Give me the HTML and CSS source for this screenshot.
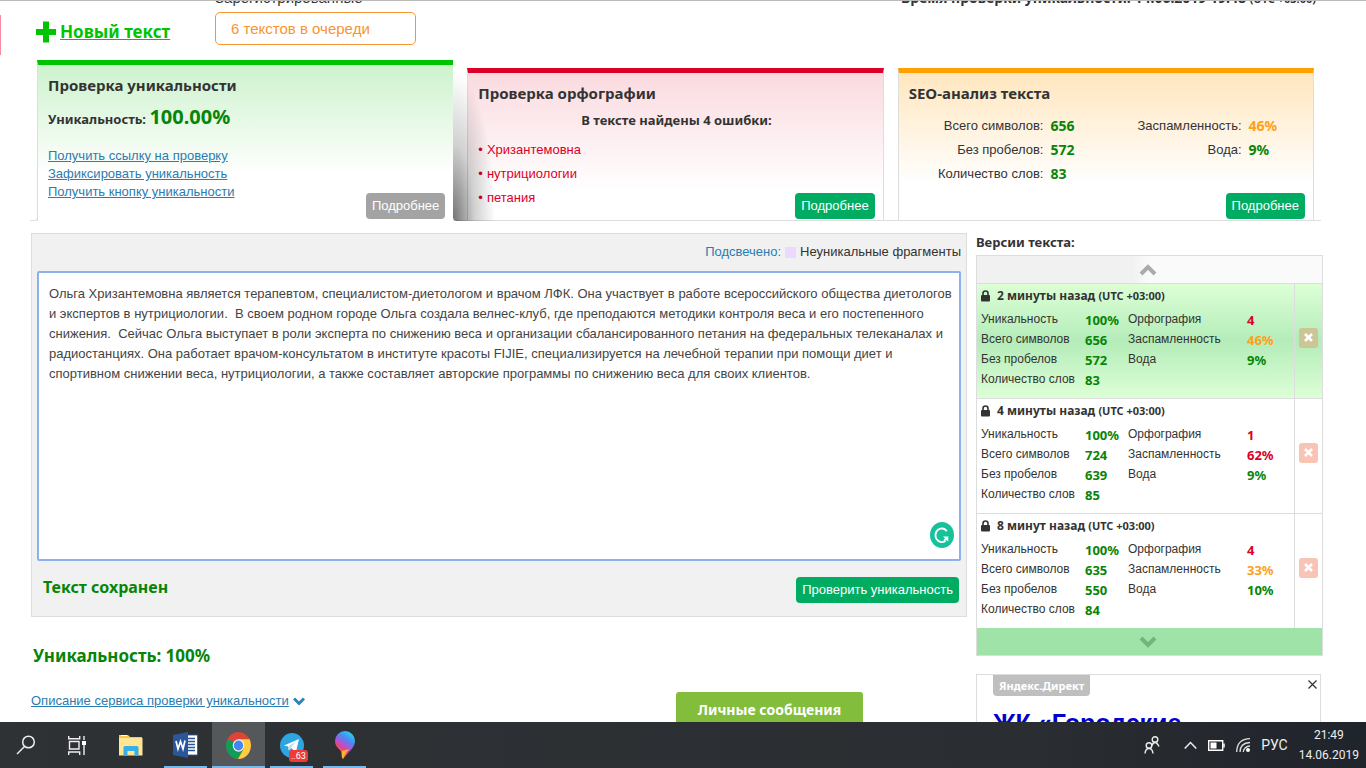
FILE: index.html
```html
<!DOCTYPE html>
<html lang="ru">
<head>
<meta charset="utf-8">
<title>Проверка уникальности текста</title>
<link rel="stylesheet" href="styles.css">
</head>
<body>
<div class="page">
  <div class="side-tab"></div>
  <header class="top">
    <a class="new-text" href="#"><svg width="20" height="22" viewBox="0 0 20 22"><path d="M7 0.500h6v7.500h7v6h-7v7.500H7V14H0V8h7z" fill="#00c400"/></svg><span>Новый текст</span></a>
    <div class="queue">
      <span class="queue-label">Зарегистрированные</span>
      <div class="queue-box">6 текстов в очереди</div>
    </div>
    <div class="check-time">Время проверки уникальности: 14.06.2019 19:48 <small>(UTC +03:00)</small></div>
  </header>

  <section class="cards">
    <article class="card card-green">
      <h2>Проверка уникальности</h2>
      <p class="unique">Уникальность: <b>100.00%</b></p>
      <div class="card-foot">
        <div class="links">
          <a href="#">Получить ссылку на проверку</a>
          <a href="#">Зафиксировать уникальность</a>
          <a href="#">Получить кнопку уникальности</a>
        </div>
        <button class="btn btn-gray">Подробнее</button>
      </div>
    </article>
    <article class="card card-red">
      <h2>Проверка орфографии</h2>
      <p class="found">В тексте найдены 4 ошибки:</p>
      <div class="card-foot">
        <ul class="errors"><li>Хризантемовна</li><li>нутрициологии</li><li>петания</li></ul>
        <button class="btn">Подробнее</button>
      </div>
    </article>
    <article class="card card-orange">
      <h2>SEO-анализ текста</h2>
      <table class="seo">
        <tr><th>Всего символов:</th><td class="ok">656</td><th>Заспамленность:</th><td class="warn">46%</td></tr>
        <tr><th>Без пробелов:</th><td class="ok">572</td><th>Вода:</th><td class="ok">9%</td></tr>
        <tr><th>Количество слов:</th><td class="ok">83</td><td></td><td></td></tr>
      </table>
      <button class="btn">Подробнее</button>
    </article>
  </section>

  <div class="columns">
    <main>
      <section class="editor">
        <div class="legend"><label for="text">Подсвечено:</label><i class="swatch"></i><span>Неуникальные фрагменты</span></div>
        <div class="area">
          <textarea id="text" spellcheck="false">Ольга Хризантемовна является терапевтом, специалистом-диетологом и врачом ЛФК. Она участвует в работе всероссийского общества диетологов
и экспертов в нутрициологии.  В своем родном городе Ольга создала велнес-клуб, где преподаются методики контроля веса и его постепенного
снижения.  Сейчас Ольга выступает в роли эксперта по снижению веса и организации сбалансированного петания на федеральных телеканалах и
радиостанциях. Она работает врачом-консультатом в институте красоты FIJIE, специализируется на лечебной терапии при помощи диет и
спортивном снижении веса, нутрициологии, а также составляет авторские программы по снижению веса для своих клиентов.</textarea>
          <svg class="grammar" width="24" height="26" viewBox="0 0 24 26"><ellipse cx="12" cy="13" rx="12" ry="13" fill="#15c39a"/><path d="M16.800 9.200A6.300 6.800 0 1 0 15.500 18.700" fill="none" stroke="#fff" stroke-width="1.900"/><path d="M13 14.500h5.300v5l-1.900-1.600-1.800 1-.9-1.500 1.300-1z" fill="#fff"/></svg>
        </div>
        <div class="editor-foot"><strong>Текст сохранен</strong><button class="btn">Проверить уникальность</button></div>
      </section>
      <h3 class="result">Уникальность: 100%</h3>
      <div class="bottom-row">
        <a class="about" href="#"><span>Описание сервиса проверки уникальности</span><svg width="12" height="9" viewBox="0 0 12 9"><path d="M1 1.500l5 5 5-5" fill="none" stroke="#2b83b8" stroke-width="3"/></svg></a>
        <button class="messages">Личные сообщения</button>
      </div>
    </main>

    <aside>
      <h3 class="side-title">Версии текста:</h3>
      <div class="versions">
        <button class="scroll up" aria-label="Вверх"><svg width="18" height="12" viewBox="0 0 18 12"><path d="M2 10l7-7 7 7" fill="none" stroke="#aaa" stroke-width="4"/></svg></button>
        <article class="version active">
          <div class="info">
            <h4><svg width="9" height="12" viewBox="0 0 9 12"><path d="M2 6V3.500a2.500 2.500 0 0 1 5 0V6" fill="none" stroke="#333" stroke-width="1.600"/><rect y="5" width="9" height="6.500" rx="1" fill="#333"/></svg>2 минуты назад <small>(UTC +03:00)</small></h4>
            <table>
              <tr><th>Уникальность</th><td class="ok">100%</td><th>Орфография</th><td class="bad">4</td></tr>
              <tr><th>Всего символов</th><td class="ok">656</td><th>Заспамленность</th><td class="warn">46%</td></tr>
              <tr><th>Без пробелов</th><td class="ok">572</td><th>Вода</th><td class="ok">9%</td></tr>
              <tr><th>Количество слов</th><td class="ok">83</td><th></th><td></td></tr>
            </table>
          </div>
          <div class="remove"><button aria-label="Удалить"><svg width="9" height="9" viewBox="0 0 9 9"><path d="M1 1l7 7M8 1L1 8" stroke="#fff" stroke-width="2.500"/></svg></button></div>
        </article>
        <article class="version">
          <div class="info">
            <h4><svg width="9" height="12" viewBox="0 0 9 12"><path d="M2 6V3.500a2.500 2.500 0 0 1 5 0V6" fill="none" stroke="#333" stroke-width="1.600"/><rect y="5" width="9" height="6.500" rx="1" fill="#333"/></svg>4 минуты назад <small>(UTC +03:00)</small></h4>
            <table>
              <tr><th>Уникальность</th><td class="ok">100%</td><th>Орфография</th><td class="bad">1</td></tr>
              <tr><th>Всего символов</th><td class="ok">724</td><th>Заспамленность</th><td class="bad">62%</td></tr>
              <tr><th>Без пробелов</th><td class="ok">639</td><th>Вода</th><td class="ok">9%</td></tr>
              <tr><th>Количество слов</th><td class="ok">85</td><th></th><td></td></tr>
            </table>
          </div>
          <div class="remove"><button aria-label="Удалить"><svg width="9" height="9" viewBox="0 0 9 9"><path d="M1 1l7 7M8 1L1 8" stroke="#fff" stroke-width="2.500"/></svg></button></div>
        </article>
        <article class="version">
          <div class="info">
            <h4><svg width="9" height="12" viewBox="0 0 9 12"><path d="M2 6V3.500a2.500 2.500 0 0 1 5 0V6" fill="none" stroke="#333" stroke-width="1.600"/><rect y="5" width="9" height="6.500" rx="1" fill="#333"/></svg>8 минут назад <small>(UTC +03:00)</small></h4>
            <table>
              <tr><th>Уникальность</th><td class="ok">100%</td><th>Орфография</th><td class="bad">4</td></tr>
              <tr><th>Всего символов</th><td class="ok">635</td><th>Заспамленность</th><td class="warn">33%</td></tr>
              <tr><th>Без пробелов</th><td class="ok">550</td><th>Вода</th><td class="ok">10%</td></tr>
              <tr><th>Количество слов</th><td class="ok">84</td><th></th><td></td></tr>
            </table>
          </div>
          <div class="remove"><button aria-label="Удалить"><svg width="9" height="9" viewBox="0 0 9 9"><path d="M1 1l7 7M8 1L1 8" stroke="#fff" stroke-width="2.500"/></svg></button></div>
        </article>
        <button class="scroll down" aria-label="Вниз"><svg width="18" height="12" viewBox="0 0 18 12"><path d="M2 2l7 7 7-7" fill="none" stroke="#6fb57c" stroke-width="4"/></svg></button>
      </div>
      <div class="ad">
        <div class="ad-head"><span>Яндекс.Директ</span><button aria-label="Закрыть"><svg width="9" height="9" viewBox="0 0 9 9"><path d="M.5.5l8 8M8.500.5l-8 8" stroke="#333" stroke-width="1.200"/></svg></button></div>
        <a class="ad-title" href="#">ЖК «Городские</a>
      </div>
    </aside>
  </div>
</div>

<footer class="taskbar">
  <div class="apps">
    <button class="app small" aria-label="Поиск"><svg width="20" height="20" viewBox="0 0 20 20"><circle cx="12.500" cy="7" r="5.800" fill="none" stroke="#eee" stroke-width="1.500"/><path d="M8.500 11.500L1 19" stroke="#eee" stroke-width="1.500"/></svg></button>
    <button class="app small" aria-label="Представление задач"><svg width="18" height="19" viewBox="0 0 18 19"><path d="M.7 0v2.700h11V0M.7 19v-3h11v3M1.500 5.500h9.500v7.500H1.500zM16 0v4M16 9v10" fill="none" stroke="#eee" stroke-width="1.400"/><rect x="14" y="5" width="4" height="4" fill="#fff"/></svg></button>
    <button class="app wide" aria-label="Проводник"><svg width="24" height="22" viewBox="0 0 24 22"><path d="M0 1h9l2 2h12v18H0z" fill="#f9c846"/><path d="M0 4h23.500v17.500H0z" fill="#ffe694"/><path d="M2 1.500h6" stroke="#fff" stroke-width="1"/><path d="M4.500 22v-8.500q0-1.500 1.500-1.500h12q1.500 0 1.500 1.500V22h-4v-5h-7v5z" fill="#36aee6"/></svg></button>
    <button class="app open" aria-label="Word"><svg width="25" height="26" viewBox="0 0 25 26"><path d="M13 3h11.500v20H13z" fill="#fff" stroke="#2b579a" stroke-width=".8"/><path d="M14 6.500h8M14 9.500h8M14 12.500h8M14 15.500h8M14 18.500h8" stroke="#2b579a" stroke-width="1.500"/><path d="M0 3L15 0v26L0 23z" fill="#2b579a"/><path d="M3 9l2 8 2.500-7.500L10 17l2-8.500" fill="none" stroke="#fff" stroke-width="1.700"/></svg></button>
    <button class="app open current" aria-label="Chrome"><svg width="25" height="27" viewBox="0 0 26 26" preserveAspectRatio="none"><circle cx="13" cy="13" r="13" fill="#db4437"/><path d="M1.700 6.500A13 13 0 0 0 12.500 26l6-10z" fill="#0f9d58"/><path d="M13 7h11.500A13 13 0 0 1 12.500 26l6-10z" fill="#ffcd40"/><circle cx="13" cy="13" r="6" fill="#f1f1f1"/><circle cx="13" cy="13" r="4.800" fill="#4285f4"/></svg></button>
    <button class="app open" aria-label="Telegram"><svg width="24" height="25" viewBox="0 0 24 25"><ellipse cx="12" cy="12.500" rx="12" ry="12.500" fill="#2ca5e0"/><path d="M4 12.500L19 6l-3 13-5-4-2 2.500-1-4z" fill="#fff"/><path d="M8 13.500l8-5-5.500 6.500-1.500 2.500z" fill="#c8daea"/></svg><span class="badge">..63</span></button>
    <button class="app open" aria-label="Paint 3D"><svg width="20" height="28" viewBox="0 0 20 28"><defs><linearGradient id="drop" x1=".7" y1="0" x2=".25" y2=".9"><stop offset="0" stop-color="#21d4f5"/><stop offset=".3" stop-color="#4a8bf0"/><stop offset=".5" stop-color="#9a5ee0"/><stop offset=".72" stop-color="#f0407e"/><stop offset="1" stop-color="#ff9d28"/></linearGradient></defs><path d="M10 0a10 10 0 0 1 10 10c0 7-8 12-12 18-2-3 0-6-3-9C2 16 0 14 0 10A10 10 0 0 1 10 0z" fill="url(#drop)"/><path d="M7 20q4-1 7-2-5 6-6 10-2-3-1-8z" fill="#ffb52c"/></svg></button>
  </div>
  <div class="tray">
    <svg width="16" height="18" viewBox="0 0 16 18"><g fill="none" stroke="#eee" stroke-width="1.400"><circle cx="11" cy="3.500" r="2.800"/><path d="M8 9.500q1-3 3-3t4 4"/><circle cx="5" cy="9.500" r="2.800"/><path d="M1 17.500q.5-5 4-5t4 5"/></g></svg>
    <svg class="chevron" width="13" height="8" viewBox="0 0 13 8"><path d="M.7 7.500l5.800-6 5.800 6" fill="none" stroke="#eee" stroke-width="1.500"/></svg>
    <svg width="17" height="11" viewBox="0 0 17 11"><path d="M.7.700h14v9.600H.7z" fill="none" stroke="#fff" stroke-width="1.400"/><rect x="2.500" y="2.500" width="6" height="6" fill="#fff"/><path d="M16 3.500v4" stroke="#fff" stroke-width="1.500"/></svg>
    <svg width="14" height="14" viewBox="0 0 14 14"><g fill="none" stroke="#ddd" stroke-width="1.300"><path d="M.7 14Q1 1 14 .7M4 14Q4 5 14 4.500M7.200 14Q8 8.500 14 8"/></g><circle cx="12" cy="12" r="2" fill="#fff"/></svg>
    <span class="lang">РУС</span>
    <div class="clock"><span>21:49</span><span>14.06.2019</span></div>
  </div>
</footer>
</body>
</html>
```
FILE: styles.css
```css
* { box-sizing: border-box; }
body {
  margin: 0;
  height: 100vh;
  display: flex;
  flex-direction: column;
  font-family: "Liberation Sans", "Noto Sans", sans-serif;
  font-size: 13px;
  line-height: 18px;
  color: #333;
  background: #fff;
}
h2, h3, h4, p, ul { margin: 0; padding: 0; }
h2, h3, h4, td, strong, .unique, .unique b, .found, .new-text, .check-time, .messages, .ad-head span {
  font-family: "Noto Sans", "Open Sans", sans-serif;
  font-weight: 700;
}
button { font-family: inherit; border: 0; padding: 0; cursor: pointer; }
a { color: #2b7cb0; }
svg { display: block; flex: none; }
table { border-collapse: collapse; }
th { font-weight: 400; text-align: left; padding: 0; }
td { padding: 0; }
.ok { color: #078507; }
.warn { color: #ff9f1a; }
.bad { color: #dc0028; }

.page {
  flex: 1;
  min-height: 0;
  overflow: hidden;
  position: relative;
  border-top: 1px solid #bbb;
  padding: 0 43px 0 31px;
}
.side-tab {
  position: absolute;
  left: 0;
  top: 14px;
  width: 1px;
  height: 40px;
  background: #f58ca0;
}

.top { display: flex; align-items: flex-start; height: 59px; padding: 0 7px 0 5px; }
.new-text {
  display: flex;
  align-items: center;
  gap: 4px;
  width: 179px;
  margin-top: 20px;
  color: #00c400;
  font-size: 17px;
  line-height: 22px;
}
.queue { width: 201px; margin-top: -12px; }
.queue-label { display: block; font-size: 15px; line-height: 18px; margin-bottom: 5px; }
.queue-box {
  height: 33px;
  border: 1px solid #f79433;
  border-radius: 5px;
  padding: 0 15px;
  font-size: 15px;
  line-height: 31px;
  color: #f79433;
}
.check-time { margin: -12px 0 0 auto; font-size: 14px; }
.check-time small { font-size: 11px; }

.cards {
  display: grid;
  grid-template-columns: repeat(3, minmax(0, 1fr));
  gap: 14px;
  align-items: end;
  padding: 0 9px 0 6px;
  position: relative;
}
.cards::after {
  content: "";
  position: absolute;
  left: 422px;
  right: 2px;
  bottom: 0;
  height: 1px;
  background: #ddd;
}
.card {
  position: relative;
  height: 153px;
  border: 1px solid #ddd;
  border-top: 5px solid;
  padding: 9px 8px 1px 10px;
  display: flex;
  flex-direction: column;
}
.card h2 { font-size: 15px; line-height: 22px; }
.card-green { height: 161px; border-top-color: #00c400; border-bottom: 0; border-right: 0; padding-bottom: 2px; background: linear-gradient(#cdf2cd, #fff 70%); }
.card-red { border-top-color: #dc0028; background: linear-gradient(#fadadf, #fff 80%); }
.card-orange { border-top-color: #ffa000; background: linear-gradient(#ffe6be, #fff 75%); }
.card-green::before {
  content: "";
  position: absolute;
  right: 100%;
  bottom: 0;
  width: 7px;
  height: 7px;
  border: solid #ddd;
  border-width: 0 1px 1px 0;
  border-bottom-right-radius: 4px;
}
.card-green::after {
  content: "";
  position: absolute;
  z-index: 1;
  left: 100%;
  top: 0;
  bottom: 0;
  width: 44px;
  border-bottom-left-radius: 4px;
  background: radial-gradient(ellipse at 0 100%, rgba(0,0,0,.55), rgba(0,0,0,.18) 35%, transparent 68%);
}
.card-foot { flex: 1; min-height: 0; display: flex; justify-content: space-between; align-items: flex-start; }
.card-foot .btn { align-self: flex-end; }
.card-orange .btn { margin: auto 0 0 auto; }
.unique { margin-top: 9px; line-height: 24px; }
.unique b { font-size: 20px; color: #078507; }
.links { display: flex; flex-direction: column; align-items: flex-start; margin-top: 16px; line-height: 18px; }
.found { text-align: center; margin-top: 7px; }
.errors { list-style: none; color: #dc0028; line-height: 24px; margin-top: 9px; }
.errors li::before { content: "•"; margin-right: 4px; }
.seo { width: 100%; table-layout: fixed; line-height: 24px; margin-top: 10px; }
.seo th { text-align: right; width: 34%; }
.seo td { width: 16%; padding-left: 7px; font-size: 14px; }

.btn {
  height: 26px;
  padding: 0 6px;
  border-radius: 4px;
  background: #00ac62;
  color: #fff;
  font-size: 13px;
  line-height: 26px;
}
.btn-gray { background: #a3a3a3; }

.columns {
  display: grid;
  grid-template-columns: minmax(0, 1fr) 347px;
  gap: 9px;
  margin-top: 12px;
}
.editor { border: 1px solid #ddd; background: #f1f1f1; padding: 9px 5px 13px 5px; }
.legend { display: flex; align-items: center; justify-content: flex-end; gap: 4px; height: 18px; margin-bottom: 10px; }
.legend label { color: #2b7cb0; }
.swatch { width: 11px; height: 11px; background: #ebd9ff; }
.area { position: relative; }
textarea {
  display: block;
  width: 100%;
  height: 290px;
  resize: none;
  outline: 0;
  border: 2px solid #8fb0ee;
  border-radius: 2px;
  padding: 11px 10px;
  font-family: inherit;
  font-size: 13px;
  line-height: 20px;
  color: #444;
  white-space: pre;
  overflow: hidden;
}
.grammar { position: absolute; right: 7px; bottom: 13px; }
.editor-foot { display: flex; justify-content: space-between; align-items: flex-start; padding: 16px 2px 0 6px; }
.editor-foot strong { font-size: 16px; line-height: 20px; color: #078507; }
.result { margin: 27px 0 0 2px; font-size: 17px; line-height: 24px; color: #078507; }
.bottom-row { display: flex; align-items: flex-start; margin-top: 24px; }
.about { display: flex; align-items: center; gap: 4px; width: 645px; line-height: 18px; text-decoration: none; }
.about span { text-decoration: underline; }
.messages {
  width: 187px;
  height: 34px;
  border-radius: 3px 3px 0 0;
  background: #83bd3c;
  color: #fff;
  font-size: 14px;
}

.side-title { font-size: 13px; line-height: 18px; margin-bottom: 4px; }
.versions { border: 1px solid #ddd; }
.scroll { display: flex; width: 100%; height: 27px; align-items: center; justify-content: center; padding-right: 4px; }
.up { background: linear-gradient(90deg, #f1f1f1 45%, #fafafa 50%); }
.down { background: #9fe3a9; }
.version { display: flex; height: 115px; border-top: 1px solid #ddd; }
.active { background: linear-gradient(#ddffd6, #b4ecb9 50%, #ddffd6); }
.info { flex: 1; padding: 3px 0 0 4px; font-size: 12px; }
.info h4 { display: flex; align-items: center; font-size: 12px; line-height: 18px; white-space: pre; }
.info h4 svg { margin-right: 7px; }
.info small { font-size: 11px; }
.info table { table-layout: fixed; width: 100%; line-height: 20px; margin-top: 4px; }
.info th { width: 104px; vertical-align: top; line-height: 20px; }
.info td { width: 43px; line-height: 18px; padding-top: 2px; font-size: 13px; }
.info th:nth-child(3) { width: 119px; }
.info td:last-child { width: auto; }
.remove { width: 28px; border-left: 1px solid #ddd; display: flex; align-items: center; justify-content: center; padding-bottom: 7px; }
.remove button { width: 19px; height: 20px; border-radius: 3px; background: #f8c4b5; display: flex; align-items: center; justify-content: center; }
.active .remove button { background: #ccc596; }
.ad { margin: 18px 2px 0 0; border: 1px solid #ddd; padding: 0 3px 0 16px; height: 120px; }
.ad-head { display: flex; justify-content: space-between; align-items: flex-start; }
.ad-head span { background: #bfbfbf; color: #fff; font-size: 11px; line-height: 21px; padding: 0 6px; border-radius: 0 0 4px 4px; }
.ad-head button { background: none; margin-top: 5px; }
.ad-title { display: block; margin-top: 9px; font-size: 25px; line-height: 36px; font-weight: 700; color: #0000d0; text-decoration: none; }

.taskbar {
  flex: none;
  display: flex;
  justify-content: space-between;
  height: 46px;
  background: linear-gradient(90deg, #2f3235, #2a2d31 75%, #20242b);
  color: #eee;
  font-family: Roboto, "Noto Sans", sans-serif;
}
.apps { display: flex; }
.app {
  position: relative;
  width: 53px;
  display: flex;
  align-items: center;
  justify-content: center;
  background: none;
}
.small { width: 51px; }
.wide { width: 57px; }
.open::after {
  content: "";
  position: absolute;
  left: 5px;
  right: 5px;
  bottom: 0;
  height: 2px;
  background: #76b9ed;
}
.current { background: #54585b; }
.current::after { left: 0; right: 0; }
.badge { position: absolute; left: 24px; bottom: 6px; padding: 0 2px; border-radius: 3px; background: #f03a3a; color: #fff; font-size: 9px; line-height: 12px; }
.tray { display: flex; align-items: center; gap: 11px; padding-right: 7px; }
.chevron { margin-left: 13px; }
.lang { font-size: 14px; }
.clock { display: flex; flex-direction: column; align-items: center; font-size: 12px; line-height: 20px; }
```
